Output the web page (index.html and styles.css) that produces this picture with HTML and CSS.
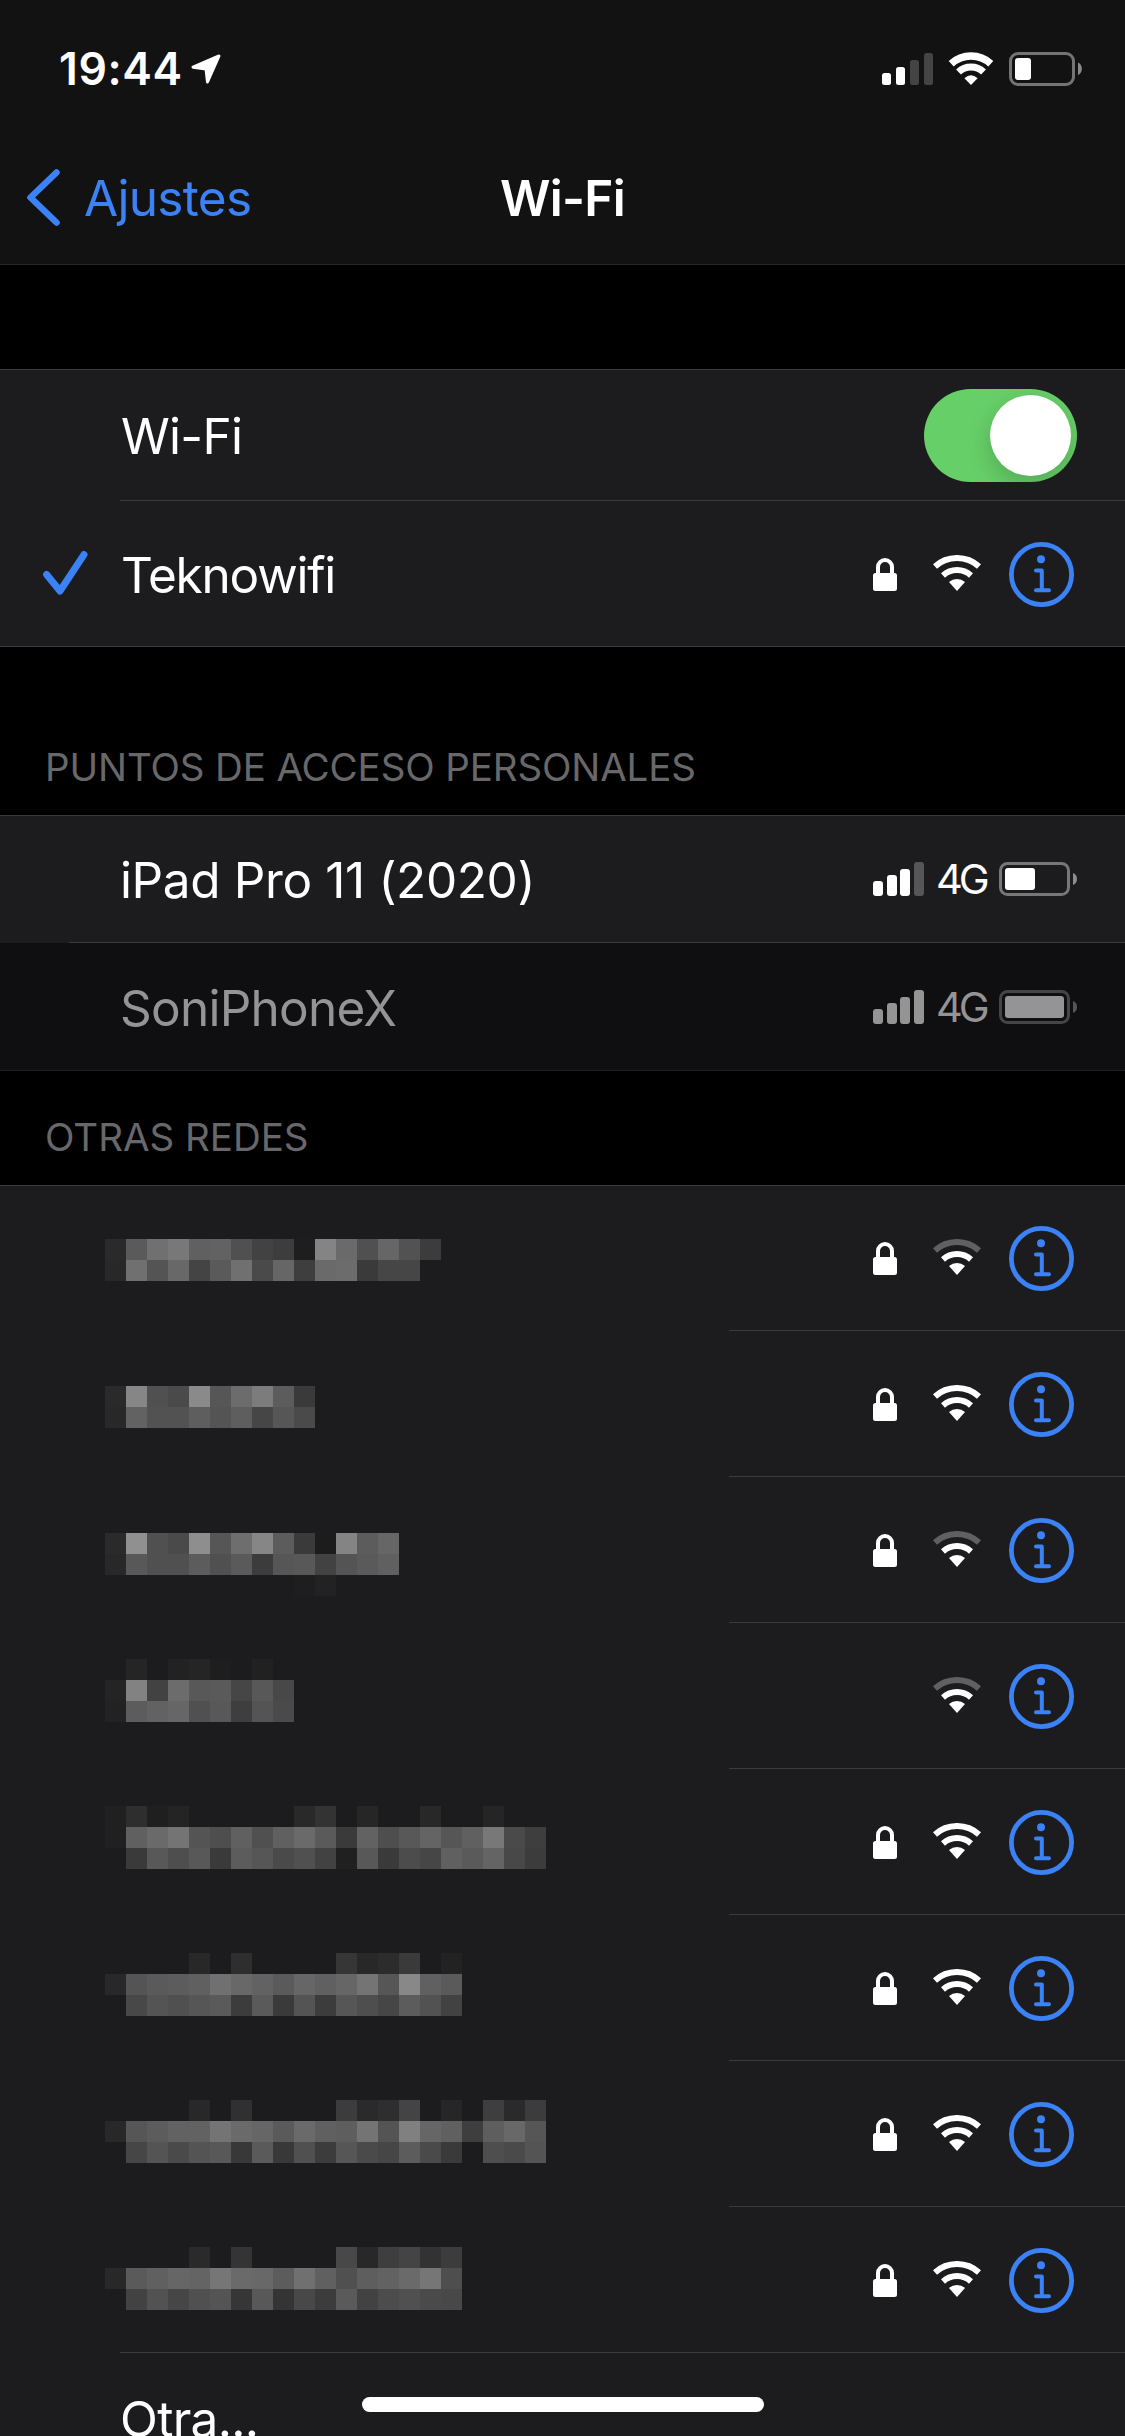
FILE: index.html
```html
<!DOCTYPE html>
<html lang="es">
<head>
<meta charset="utf-8">
<title>Wi-Fi</title>
<link rel="stylesheet" href="styles.css">
</head>
<body>
<svg class="sprite" aria-hidden="true">
  <symbol id="lock" viewBox="0 0 24 33">
    <rect y="15" width="24" height="18" rx="2.5" fill="#fff"/>
    <path d="M5 17V9a7 7 0 0 1 14 0v8" fill="none" stroke="#fff" stroke-width="4"/>
  </symbol>
  <symbol id="wifi" viewBox="0 0 48 36">
    <path d="M2 11.4A33 33 0 0 1 46 11.4" fill="none" stroke="#fff" stroke-width="6"/>
    <path d="M10 20.4A21 21 0 0 1 38 20.4" fill="none" stroke="#fff" stroke-width="6"/>
    <path d="M24 36L16 27A12 12 0 0 1 32 27Z" fill="#fff"/>
  </symbol>
  <symbol id="wifi-mid" viewBox="0 0 48 36">
    <path d="M2 11.4A33 33 0 0 1 46 11.4" fill="none" stroke="#606062" stroke-width="6"/>
    <path d="M10 20.4A21 21 0 0 1 38 20.4" fill="none" stroke="#fff" stroke-width="6"/>
    <path d="M24 36L16 27A12 12 0 0 1 32 27Z" fill="#fff"/>
  </symbol>
  <symbol id="info" viewBox="0 0 65 65">
    <circle cx="32.5" cy="32.5" r="30.1" fill="none" stroke="#3b82f6" stroke-width="4.8"/>
    <circle cx="32" cy="17.3" r="4" fill="#3b82f6"/>
    <path d="M27 28.5H32.8V48.2M27 48.2H40" fill="none" stroke="#3b82f6" stroke-width="4" stroke-linecap="round" stroke-linejoin="round"/>
  </symbol>
</svg>

<header class="top">
  <div class="status">
    <span class="clock">19:44</span>
    <svg class="location" viewBox="0 0 30 30"><path d="M28 2L2 13.2L15 15L16.5 28Z" fill="#fff" stroke="#fff" stroke-width="3" stroke-linejoin="round"/></svg>
    <svg class="status-icons" viewBox="0 0 200 34">
      <g fill="#fff"><rect y="21" width="9" height="12" rx="2.5"/><rect x="14" y="15" width="9" height="18" rx="2.5"/></g>
      <g fill="#444"><rect x="28" y="8" width="9" height="25" rx="2.5"/><rect x="42" y="1" width="9" height="32" rx="2.5"/></g>
      <g fill="none" stroke="#fff">
        <path d="M69.2 11.8A29.2 29.2 0 0 1 108.8 11.8" stroke-width="7.4"/>
        <path d="M76.5 20A18.3 18.3 0 0 1 101.5 20" stroke-width="7"/>
      </g>
      <path d="M89 33L82.4 26.2Q89 20.5 95.6 26.2Z" fill="#fff"/>
      <rect x="128.5" y="1.5" width="63" height="31" rx="7.5" fill="none" stroke="#747474" stroke-width="3"/>
      <rect x="133" y="6" width="16" height="22" rx="3" fill="#fff"/>
      <path d="M196 10.5A7 7 0 0 1 196 23Z" fill="#8a8a8a"/>
    </svg>
  </div>
  <nav class="nav">
    <a class="back">
      <svg class="chevron" viewBox="0 0 33 57"><path d="M29.5 3.5L3.5 28.500L29.5 53.500" fill="none" stroke="#3b82f6" stroke-width="6.5" stroke-linecap="round" stroke-linejoin="round"/></svg>
      <span class="back-text">Ajustes</span>
    </a>
    <h1 class="title">Wi-Fi</h1>
  </nav>
</header>

<main>
  <section class="group">
    <div class="row row-switch">
      <div class="body lined"><span class="label label-wifi">Wi-Fi</span><span class="switch"><span class="knob"></span></span></div>
    </div>
    <div class="row row-current">
      <div class="lead"><svg class="check" viewBox="0 0 45 44"><path d="M3.6 23.5L17 40L41 3.6" fill="none" stroke="#3b82f6" stroke-width="7" stroke-linecap="round" stroke-linejoin="round"/></svg></div>
      <div class="body"><span class="label label-current">Teknowifi</span>
        <div class="icons"><svg class="lock"><use href="#lock"/></svg><svg class="wifi"><use href="#wifi"/></svg><svg class="info"><use href="#info"/></svg></div>
      </div>
    </div>
  </section>

  <h2 class="heading heading-hotspots">PUNTOS DE ACCESO PERSONALES</h2>
  <section class="group group-hotspots">
    <div class="row row-hotspot">
      <span class="label label-ipad">iPad Pro 11 (2020)</span>
      <div class="meter">
        <svg class="bars" viewBox="0 0 51 34"><g fill="#fff"><rect y="19" width="10" height="15" rx="3"/><rect x="14" y="13" width="10" height="21" rx="3"/><rect x="27" y="7" width="10" height="27" rx="3"/></g><rect x="41" width="10" height="34" rx="3" fill="#565658"/></svg>
        <span class="carrier">4G</span>
        <svg class="battery" viewBox="0 0 78 34"><rect x="1.5" y="1.5" width="68" height="31" rx="7" fill="none" stroke="#777779" stroke-width="3"/><rect x="6" y="6" width="30" height="22" rx="3" fill="#fff"/><path d="M74 11A6.5 6.5 0 0 1 74 23Z" fill="#8d8d8f"/></svg>
      </div>
    </div>
    <div class="row row-hotspot dim">
      <span class="label label-soni">SoniPhoneX</span>
      <div class="meter">
        <svg class="bars" viewBox="0 0 51 34"><g fill="#949494"><rect y="19" width="10" height="15" rx="3"/><rect x="14" y="13" width="10" height="21" rx="3"/><rect x="27" y="7" width="10" height="27" rx="3"/><rect x="41" width="10" height="34" rx="3"/></g></svg>
        <span class="carrier">4G</span>
        <svg class="battery" viewBox="0 0 78 34"><rect x="1.5" y="1.5" width="68" height="31" rx="7" fill="none" stroke="#454547" stroke-width="3"/><rect x="6" y="6" width="59" height="22" rx="3" fill="#949494"/><path d="M74 11A6.5 6.5 0 0 1 74 23Z" fill="#565658"/></svg>
      </div>
    </div>
  </section>

  <h2 class="heading heading-others">OTRAS REDES</h2>
  <section class="group group-others">
    <div class="row row-net">
      <svg class="mosaic" data-top="53" data-cells="2a 5a 70 78 60 62 50 42 3d 1e 84 6a 50 66 52 3c/28 70 54 68 44 5a 70 4a 66 3e 6a 6c 3a 46 46"></svg>
      <div class="icons lined"><svg class="lock"><use href="#lock"/></svg><svg class="wifi"><use href="#wifi-mid"/></svg><svg class="info"><use href="#info"/></svg></div>
    </div>
    <div class="row row-net">
      <svg class="mosaic" data-top="55" data-cells="2a 86 50 4a 8a 56 6c 7c 5c 3a/28 62 52 52 5e 54 5e 46 56 4a"></svg>
      <div class="icons lined"><svg class="lock"><use href="#lock"/></svg><svg class="wifi"><use href="#wifi"/></svg><svg class="info"><use href="#info"/></svg></div>
    </div>
    <div class="row row-net">
      <svg class="mosaic" data-top="56" data-cells="2a 90 50 4a 8e 56 6e 86 5c 3a 1c 84 5c 66/28 58 50 50 5c 50 5a 3c 56 58 42 54 5a 60/.. .. .. .. .. .. .. .. .. 1e 22"></svg>
      <div class="icons lined"><svg class="lock"><use href="#lock"/></svg><svg class="wifi"><use href="#wifi-mid"/></svg><svg class="info"><use href="#info"/></svg></div>
    </div>
    <div class="row row-net">
      <svg class="mosaic" data-top="36" data-cells=".. 25 .. 22 25 1e .. 21/24 82 42 6c 58 5a 46 58 48/22 5c 62 66 50 58 3e 54 4a"></svg>
      <div class="icons lined"><svg class="wifi"><use href="#wifi-mid"/></svg><svg class="info"><use href="#info"/></svg></div>
    </div>
    <div class="row row-net">
      <svg class="mosaic" data-top="37" data-cells="20 2e 1f 24 .. .. .. .. .. 29 33 .. 26 .. .. 28 .. .. 25/20 60 6a 74 54 4e 60 50 60 6a 5a 3a 62 4e 58 64 56 60 78 4a 3e/.. 3a 58 4e 58 3a 5c 56 4a 50 42 20 58 3a 4c 46 60 5a 64 48 3c"></svg>
      <div class="icons lined"><svg class="lock"><use href="#lock"/></svg><svg class="wifi"><use href="#wifi"/></svg><svg class="info"><use href="#info"/></svg></div>
    </div>
    <div class="row row-net">
      <svg class="mosaic" data-top="38" data-cells=".. .. .. .. 28 .. 2e .. .. .. .. 36 28 2c 3a .. 22/28 54 5a 5c 60 70 68 62 5a 66 60 66 74 56 88 60 5a/.. 48 54 50 56 5a 3c 5a 3a 54 3c 56 4e 46 5c 52 42"></svg>
      <div class="icons lined"><svg class="lock"><use href="#lock"/></svg><svg class="wifi"><use href="#wifi"/></svg><svg class="info"><use href="#info"/></svg></div>
    </div>
    <div class="row row-net">
      <svg class="mosaic" data-top="39" data-cells=".. .. .. .. 28 .. 30 .. .. .. .. 3c 2a 2e 44 .. 26 .. 3e 2a 3c/28 56 5c 62 62 74 6a 66 5a 6a 60 5e 74 54 80 66 60 3e 5e 68 56/.. 46 54 4a 54 58 38 5a 38 50 3c 56 4a 46 5c 4a 3a .. 4e 4a 54"></svg>
      <div class="icons lined"><svg class="lock"><use href="#lock"/></svg><svg class="wifi"><use href="#wifi"/></svg><svg class="info"><use href="#info"/></svg></div>
    </div>
    <div class="row row-net row-last">
      <svg class="mosaic" data-top="40" data-cells=".. .. .. .. 2a .. 34 .. .. .. .. 48 28 3e 44 32 3c/28 5a 60 66 64 76 6a 68 5c 70 60 50 5e 62 6a 76 4e/.. 42 52 46 50 54 36 58 34 48 3c 5a 42 4c 50 4a 48"></svg>
      <div class="icons lined"><svg class="lock"><use href="#lock"/></svg><svg class="wifi"><use href="#wifi"/></svg><svg class="info"><use href="#info"/></svg></div>
    </div>
    <div class="row row-other"><span class="label label-other">Otra...</span></div>
  </section>
</main>
<div class="home-indicator"></div>
<script src="mosaic.js"></script>
</body>
</html>
```

FILE: styles.css
```css
* { box-sizing: border-box; }

body {
  margin: 0;
  width: 1125px;
  height: 2436px;
  overflow: hidden;
  background: #000;
  color: #fff;
  font-family: Inter, "Liberation Sans", sans-serif;
  font-size: 49.5px;
}

svg { display: block; flex: none; }
.sprite { position: absolute; width: 0; height: 0; }

/* Status bar and navigation */
.top {
  height: 265px;
  background: #121212;
  border-bottom: 1px solid #272729;
}
.status {
  display: flex;
  height: 132px;
  padding: 52px 43px 0 59px;
}
.clock {
  width: 131px;
  height: 34px;
  line-height: 34px;
  font-size: 44.5px;
  font-weight: 600;
  letter-spacing: .6px;
}
.location { width: 30px; height: 30px; margin: 2px 0 0 1px; }
.status-icons { width: 200px; height: 34px; margin-left: auto; }
.nav {
  display: grid;
  grid-template-columns: 1fr auto 1fr;
  height: 132px;
  line-height: 132px;
}
.back { display: flex; color: #3b82f6; padding-left: 27px; letter-spacing: -.7px; }
.chevron { width: 33px; height: 57px; margin: 37px 24px 0 0; }
.title { margin: 0; font-size: 49.5px; font-weight: 600; letter-spacing: -.7px; }

/* Grouped rows */
main { padding-top: 104px; }
.group {
  background: #1c1c1e;
  border: solid #3b3b3d;
  border-width: 1px 0;
}
.row { display: flex; align-items: flex-start; }
.lined { border-bottom: 1px solid #3b3b3d; }
.label { flex: 1; line-height: 60px; white-space: nowrap; letter-spacing: -.7px; }
.body { flex: 1; display: flex; align-items: flex-start; }

.row-switch { height: 131px; padding-left: 120px; }
.row-switch .body { height: 131px; padding-right: 48px; }
.row-switch .label { padding: 36px 0 0 1px; }
.switch {
  width: 153px;
  height: 93px;
  margin-top: 19px;
  padding: 6px;
  display: flex;
  justify-content: flex-end;
  border-radius: 47px;
  background: #67cf68;
  overflow: hidden;
}
.knob {
  width: 81px;
  height: 81px;
  border-radius: 50%;
  background: #fff;
  box-shadow: 0 9px 24px rgba(0, 0, 0, .18);
}

.row-current { height: 145px; }
.lead { width: 120px; padding: 50px 0 0 43px; }
.check { width: 45px; height: 44px; }
.label-current { padding: 44px 0 0 1px; letter-spacing: -1.2px; }

.icons {
  display: flex;
  justify-content: flex-end;
  height: 145px;
  padding: 41px 51px 0 0;
}
.lock { width: 24px; height: 33px; margin: 16px 36px 0 0; }
.wifi { width: 48px; height: 36px; margin: 13px 28px 0 0; }
.info { width: 65px; height: 65px; }

/* Section headings */
.heading {
  margin: 0;
  padding-left: 45px;
  line-height: 40px;
  font-size: 38.5px;
  font-weight: 400;
  color: #68686a;
}
.heading-hotspots { height: 168px; padding-top: 100px; letter-spacing: -.12px; }
.heading-others { height: 114px; padding-top: 46px; }

/* Personal hotspots */
.group-hotspots { border-bottom: 0; }
.row-hotspot { height: 127px; padding: 34px 48px 0 120px; background: linear-gradient(#3b3b3d, #3b3b3d) 69px 100% / 100% 1px no-repeat; }
.label-ipad { letter-spacing: -.37px; }
.label-soni { letter-spacing: -.75px; }
.dim { height: 128px; padding-top: 35px; color: #949494; background: #0f0f11; border-bottom: 1px solid #202022; }
.meter { display: flex; width: 204px; padding-top: 12px; }
.bars { width: 51px; height: 34px; }
.carrier { width: 75px; padding-left: 12px; font-size: 41.5px; line-height: 34px; letter-spacing: -4px; }
.battery { width: 78px; height: 34px; }

/* Other networks */
.row-net { justify-content: space-between; height: 146px; }
.mosaic { width: 500px; height: 145px; margin-left: 105px; }
.row-net .icons { width: 396px; height: 146px; }
.row-net:first-child { height: 145px; }
.row-net:first-child .icons { height: 145px; padding-top: 40px; }
.row-last { background: linear-gradient(#3b3b3d, #3b3b3d) 120px 100% / 100% 1px no-repeat; }
.row-other { height: 120px; padding: 36px 0 0 120px; }

.home-indicator {
  position: absolute;
  left: 362px;
  top: 2397px;
  width: 402px;
  height: 15px;
  border-radius: 8px;
  background: #fff;
}
```

FILE: mosaic.js
```js
// Paints each obscured network name as a grid of grey cells.
const CELL = 21;
for (const svg of document.querySelectorAll('.mosaic')) {
  const top = Number(svg.dataset.top);
  svg.dataset.cells.split('/').forEach((line, y) => {
    line.split(' ').forEach((grey, x) => {
      if (grey === '..') return;
      const rect = document.createElementNS('http://www.w3.org/2000/svg', 'rect');
      rect.setAttribute('x', x * CELL);
      rect.setAttribute('y', top + y * CELL);
      rect.setAttribute('width', CELL);
      rect.setAttribute('height', CELL);
      rect.setAttribute('fill', '#' + grey.repeat(3));
      svg.append(rect);
    });
  });
}
```
